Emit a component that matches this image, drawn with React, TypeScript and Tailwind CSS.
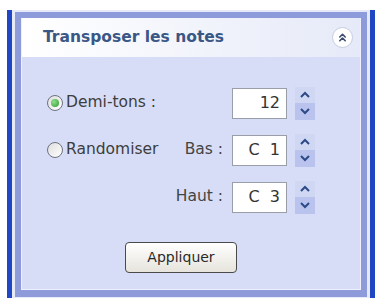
import React from "react";
import { ChevronsUp } from "lucide-react";

const font = { fontFamily: '"DejaVu Sans", "Liberation Sans", sans-serif' };

const Radio: React.FC<{ checked?: boolean }> = ({ checked }) => (
  <span className="flex-shrink-0 w-[16px] h-[16px] rounded-full border border-[#6e7280] bg-gradient-to-br from-[#dedede] to-white flex items-center justify-center">
    {checked && (
      <span className="w-[8px] h-[8px] rounded-full bg-[radial-gradient(circle_at_35%_35%,#8fe08a,#2f9a34)]" />
    )}
  </span>
);

const Spinner: React.FC = () => (
  <div className="ml-[8px] w-[20px] h-[33px] flex flex-col">
    <div className="flex-1 bg-[#d0d7f3] flex items-center justify-center">
      <svg width="10" height="7" viewBox="0 0 10 7">
        <polyline points="1,6 5,2 9,6" fill="none" stroke="#2c4a86" strokeWidth="2" />
      </svg>
    </div>
    <div className="flex-1 bg-[#b9c3ee] flex items-center justify-center">
      <svg width="10" height="7" viewBox="0 0 10 7">
        <polyline points="1,1 5,5 9,1" fill="none" stroke="#2c4a86" strokeWidth="2" />
      </svg>
    </div>
  </div>
);

const Field: React.FC<{ value: string }> = ({ value }) => (
  <div className="w-[55px] h-[31px] border border-[#9a9ea8] bg-white flex items-center justify-end pr-[6px] text-[16px] text-[#333] whitespace-pre">
    {value}
  </div>
);

export default function App() {
  return (
    <div className="w-[378px] h-[298px] bg-white pt-[10px] pl-[7px] pr-[3px] overflow-hidden" style={font}>
      <div className="h-full border-x-[5px] border-[#2146c4] bg-[#e6eaf8] px-[3px] pt-[2px]">
        <div className="h-[285px] flex flex-col border-[6px] border-b-[7px] border-[#8d9bdb]">
          <div className="flex-1 flex flex-col border border-t-0 border-[#eef1fc]">
            {/* header */}
            <div className="h-[39px] flex items-center justify-between pl-[21px] pr-[7px] bg-gradient-to-r from-white to-[#e6eaf8]">
              <span className="text-[15.5px] font-bold text-[#3a5785]">Transposer les notes</span>
              <span className="w-[21px] h-[21px] rounded-full bg-white border border-[#c6cce0] flex items-center justify-center">
                <ChevronsUp size={13} strokeWidth={3} color="#3d4c6e" />
              </span>
            </div>

            {/* body */}
            <div className="flex-1 bg-[#d7ddf6] pl-[25px] pt-[30px] text-[15.5px] text-[#3d3d3d]">
              <div className="flex items-center h-[32px]">
                <div className="w-[123px] flex items-center gap-[3px]">
                  <Radio checked />
                  <span>Demi-tons :</span>
                </div>
                <div className="w-[62px]" />
                <Field value="12" />
                <Spinner />
              </div>

              <div className="flex items-center h-[32px] mt-[15px]">
                <div className="w-[123px] flex items-center gap-[3px]">
                  <Radio />
                  <span>Randomiser</span>
                </div>
                <div className="w-[62px] pr-[9px] text-right text-[#444]">Bas :</div>
                <Field value="C  1" />
                <Spinner />
              </div>

              <div className="flex items-center h-[32px] mt-[15px]">
                <div className="w-[123px]" />
                <div className="w-[62px] pr-[9px] text-right text-[#444]">Haut :</div>
                <Field value="C  3" />
                <Spinner />
              </div>

              <button className="mt-[29px] ml-[78px] w-[112px] h-[31px] rounded-[4px] border border-[#4a4a4a] bg-gradient-to-b from-white to-[#e6e4dc] text-[14px] text-[#2a2a2a] flex items-center justify-center">
                Appliquer
              </button>
            </div>
          </div>
        </div>
      </div>
    </div>
  );
}
